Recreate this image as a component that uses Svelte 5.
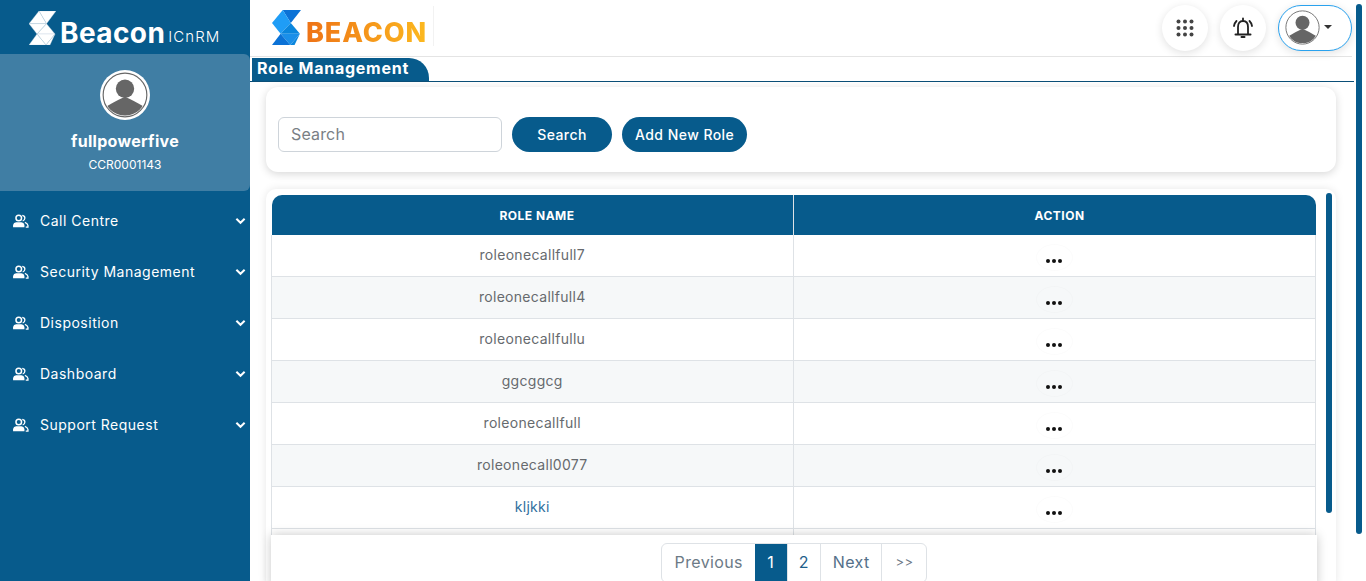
<script lang="ts">
  const menu = ["Call Centre", "Security Management", "Disposition", "Dashboard", "Support Request"];
  const roles = ["roleonecallfull7", "roleonecallfull4", "roleonecallfullu", "ggcggcg", "roleonecallfull", "roleonecall0077", "kljkki"];
</script>

{#snippet beaconMark(a: string, b: string, c: string, d: string, line: string)}
  <svg class="mark" viewBox="0 0 27 34" preserveAspectRatio="none" stroke={line} stroke-width="0.35">
    <polygon points="10,0 27,0 17.5,12.7" fill={a} />
    <polygon points="10,0 17.5,12.7 0,12.7" fill={b} />
    <polygon points="0,12.7 17.5,12.7 8,23" fill={b} />
    <polygon points="17.5,12.7 26,23 8,23" fill={c} />
    <polygon points="8,23 26,23 17,34" fill={d} />
    <polygon points="0,34 8,23 17,34" fill={a} />
    <polygon points="17,34 26,23 21,34" fill={c} />
  </svg>
{/snippet}

{#snippet avatar()}
  <svg viewBox="0 0 40 40" class="avatar-img">
    <defs>
      <clipPath id="av"><circle cx="20" cy="20" r="18" /></clipPath>
    </defs>
    <circle cx="20" cy="20" r="19" fill="#fff" stroke="#666" stroke-width="1" />
    <g clip-path="url(#av)" fill="#666">
      <circle cx="20" cy="14.5" r="8" />
      <path d="M2 38 L2 31 Q12 25 20 21.5 Q28 25 38 31 L38 38 Z" />
    </g>
  </svg>
{/snippet}

<div class="app">
  <aside class="sidebar">
    <div class="brand">
      <span class="brand-mark">{@render beaconMark("#fff", "#fff", "#fff", "#fff", "#b9cfdd")}</span>
      <span class="brand-name">Beacon</span>
      <span class="brand-sub">ICnRM</span>
    </div>
    <div class="profile">
      <div class="profile-pic">{@render avatar()}</div>
      <div class="profile-name">fullpowerfive</div>
      <div class="profile-code">CCR0001143</div>
    </div>
    <nav class="menu">
      {#each menu as item}
        <div class="menu-item">
          <svg class="menu-icon" viewBox="0 0 18 16" fill="#fff">
            <circle cx="7" cy="4.5" r="3.2" fill="none" stroke="#fff" stroke-width="1.7" />
            <path d="M0.5 15 V12.5 Q1 9.5 4 9.5 H10 Q13 9.5 13.5 12.5 V15 Z" />
            <path d="M11 1.5 Q14 2 14 4.5 Q14 7 11.5 8 M14 9.5 Q17 10.5 17.5 13 V15 H15" fill="none" stroke="#fff" stroke-width="1.5" />
          </svg>
          <span class="menu-label">{item}</span>
          <svg class="chev" viewBox="0 0 12 8"><path d="M1.5 1.5 L6 6 L10.5 1.5" fill="none" stroke="#fff" stroke-width="2.2" /></svg>
        </div>
      {/each}
    </nav>
  </aside>

  <main class="main">
    <header class="topbar">
      <div class="logo">
        {@render beaconMark("#0b72d6", "#1f9df6", "#0a86dd", "#1a8fe9", "none")}
        <span class="logo-text">BEACON</span>
      </div>
      <div class="top-actions">
        <button class="round" aria-label="Apps">
          <svg viewBox="0 0 18 18" width="18" height="18" fill="#444">
            {#each [2.5, 9, 15.5] as y}
              {#each [2.5, 9, 15.5] as x}
                <circle cx={x} cy={y} r="2" />
              {/each}
            {/each}
          </svg>
        </button>
        <button class="round" aria-label="Alerts">
          <svg viewBox="0 0 24 24" width="24" height="24" fill="none" stroke="#222" stroke-width="1.8">
            <path d="M7 18 V11 Q7 5 12 5 Q17 5 17 11 V18" />
            <path d="M4.5 18.5 H19.5" stroke-linecap="round" stroke-width="2" />
            <path d="M10.5 21 H13.5" stroke-linecap="round" stroke-width="2" />
            <path d="M12 2.5 V4" stroke-linecap="round" />
            <path d="M5.5 5 Q3.5 7 3 10 M18.5 5 Q20.5 7 21 10" stroke-linecap="round" />
          </svg>
        </button>
        <button class="user-pill" aria-label="User menu">
          <span class="pill-avatar">{@render avatar()}</span>
          <span class="caret"></span>
        </button>
      </div>
    </header>

    <div class="tab-row">
      <div class="tab">Role Management</div>
    </div>

    <div class="content">
      <section class="search-card">
        <input class="search" placeholder="Search" />
        <button class="btn btn-search">Search</button>
        <button class="btn">Add New Role</button>
      </section>

      <section class="table-wrap">
        <div class="table-card">
          <table>
            <thead>
              <tr><th>ROLE NAME</th><th>ACTION</th></tr>
            </thead>
            <tbody>
              {#each roles as role, i}
                <tr class:alt={i % 2 === 1}>
                  <td class:link={role === "kljkki"}>{role}</td>
                  <td><span class="dots"><i></i><i></i><i></i></span></td>
                </tr>
              {/each}
              <tr class="cut"><td></td><td></td></tr>
            </tbody>
          </table>
          <div class="pager-bar">
            <div class="pager">
              <span class="page prev">Previous</span>
              <span class="page num active">1</span>
              <span class="page num">2</span>
              <span class="page next">Next</span>
              <span class="page last">&gt;&gt;</span>
            </div>
          </div>
        </div>
        <div class="inner-scroll"></div>
      </section>
    </div>
  </main>
  <div class="page-scroll"></div>
</div>

<style>
  :global(body) {
    margin: 0;
    background: #fff;
    overflow: hidden;
  }
  .app {
    display: flex;
    width: 1366px;
    height: 581px;
    overflow: hidden;
    font-family: Inter, "Open Sans", sans-serif;
    color: #555;
  }
  .sidebar {
    width: 250px;
    flex: none;
    background: #075b8c;
    color: #fff;
  }
  .brand {
    height: 54px;
    display: flex;
    align-items: flex-end;
    padding: 0 0 9px 29px;
    box-sizing: border-box;
  }
  .brand-mark {
    width: 27px;
    height: 34px;
    flex: none;
    display: block;
  }
  .mark {
    display: block;
    width: 100%;
    height: 100%;
  }
  .brand-name {
    font-size: 28px;
    font-weight: 700;
    line-height: 24px;
    margin-left: 4px;
    letter-spacing: 0.4px;
  }
  .brand-sub {
    font-size: 15px;
    font-weight: 300;
    line-height: 17px;
    margin-left: 3px;
    letter-spacing: 1.1px;
  }
  .profile {
    height: 137px;
    background: #407ea4;
    border-radius: 0 6px 6px 0;
    display: flex;
    flex-direction: column;
    align-items: center;
    padding-top: 16px;
    box-sizing: border-box;
  }
  .profile-pic {
    width: 50px;
    height: 50px;
    background: #fff;
    border-radius: 50%;
    padding: 2px;
    box-sizing: border-box;
  }
  .avatar-img {
    display: block;
    width: 100%;
    height: 100%;
  }
  .profile-name {
    margin-top: 9px;
    font-size: 16px;
    font-weight: 700;
    line-height: 24px;
    letter-spacing: 0.3px;
  }
  .profile-code {
    margin-top: 3px;
    font-size: 12px;
    line-height: 18px;
  }
  .menu {
    padding-top: 4px;
  }
  .menu-item {
    height: 51px;
    display: flex;
    align-items: center;
    padding: 0 4px 0 12px;
  }
  .menu-icon {
    width: 17px;
    height: 14px;
    flex: none;
  }
  .menu-label {
    margin-left: 11px;
    font-size: 14px;
    font-weight: 400;
    flex: 1;
    letter-spacing: 0.5px;
  }
  .chev {
    width: 11px;
    height: 8px;
  }
  .main {
    flex: 1;
    min-width: 0;
  }
  .topbar {
    height: 57px;
    box-sizing: border-box;
    border-bottom: 1px solid #e4e4e4;
    display: flex;
    justify-content: space-between;
    padding: 0 0 0 22px;
    width: 1102px;
  }
  .logo {
    display: flex;
    align-items: flex-start;
    height: 40px;
    margin-top: 6px;
    padding-right: 6px;
    border-right: 1px solid #f2f2f2;
  }
  .logo :global(.mark) {
    width: 29px;
    height: 35px;
    margin-top: 4px;
  }
  .logo-text {
    font-size: 27px;
    font-weight: 800;
    line-height: 27px;
    margin-left: 5px;
    margin-top: 13px;
    background: linear-gradient(90deg, #ee7216, #fcb91f);
    -webkit-background-clip: text;
    background-clip: text;
    color: transparent;
    letter-spacing: 0.9px;
  }
  .top-actions {
    display: flex;
    gap: 12px;
    padding-top: 5px;
    align-items: flex-start;
  }
  .round {
    width: 46px;
    height: 46px;
    border-radius: 50%;
    border: none;
    background: #fff;
    box-shadow: 0 2px 8px rgba(0, 0, 0, 0.12);
    display: flex;
    align-items: center;
    justify-content: center;
    padding: 0;
  }
  .user-pill {
    width: 74px;
    height: 46px;
    border: 1px solid #2aa2ee;
    border-radius: 23px;
    background: #fff;
    box-shadow: 0 2px 8px rgba(0, 0, 0, 0.12);
    display: flex;
    align-items: center;
    padding: 0 0 2px 6px;
    box-sizing: border-box;
  }
  .pill-avatar {
    width: 35px;
    height: 35px;
    display: block;
  }
  .caret {
    margin-left: 4px;
    border-left: 4px solid transparent;
    border-right: 4px solid transparent;
    border-top: 4px solid #333;
  }
  .tab-row {
    margin-top: 1px;
    height: 23px;
    border-bottom: 1px solid #0b4f78;
    width: 1102px;
    display: flex;
    padding-left: 2px;
  }
  .tab {
    width: 177px;
    height: 23px;
    box-sizing: border-box;
    background: #075b8c;
    color: #fff;
    font-size: 16px;
    font-weight: 700;
    line-height: 21px;
    padding-left: 5px;
    border-radius: 0 20px 0 0;
    letter-spacing: 0.75px;
    white-space: nowrap;
  }
  .content {
    padding: 5px 0 0 16px;
  }
  .search-card {
    width: 1070px;
    height: 85px;
    background: #fff;
    border-radius: 12px;
    box-shadow: 0 2px 8px rgba(0, 0, 0, 0.16);
    display: flex;
    align-items: center;
    padding: 10px 12px 0;
    box-sizing: border-box;
    gap: 10px;
  }
  .search {
    width: 224px;
    height: 35px;
    box-sizing: border-box;
    border: 1px solid #ced4da;
    border-radius: 6px;
    padding: 0 12px 1px;
    font: inherit;
    font-size: 16px;
    letter-spacing: 0.15px;
    color: #555;
  }
  .search::placeholder {
    color: #7a7f85;
    opacity: 1;
  }
  .btn {
    height: 35px;
    border: none;
    border-radius: 18px;
    background: #075b8c;
    color: #fff;
    font: inherit;
    font-size: 14px;
    font-weight: 500;
    padding: 0 13px 1px;
    letter-spacing: 0.45px;
  }
  .btn-search {
    width: 100px;
  }
  .table-wrap {
    position: relative;
    margin-top: 17px;
    width: 1070px;
    height: 400px;
    padding: 6px 0 0 5px;
    box-sizing: border-box;
    border-radius: 10px;
    box-shadow: 0 0 8px rgba(0, 0, 0, 0.1);
  }
  .table-card {
    width: 1046px;
    height: 386px;
    position: relative;
    padding: 0 1px 0 0;
    box-sizing: border-box;
  }
  table {
    width: 100%;
    border-collapse: collapse;
    table-layout: fixed;
  }
  th {
    background: #075b8c;
    color: #fff;
    height: 40px;
    font-size: 12px;
    font-weight: 700;
    padding: 0 0 0 10px;
    letter-spacing: 0.5px;
  }
  th:first-child {
    width: 511px;
    border-right: 1px solid #dee2e6;
    border-top-left-radius: 10px;
  }
  th:last-child {
    border-top-right-radius: 10px;
  }
  td {
    height: 42px;
    padding: 0 0 1px;
    box-sizing: border-box;
    text-align: center;
    font-size: 14px;
    color: #666a6e;
    border-bottom: 1px solid #dee2e6;
    letter-spacing: 0.3px;
  }
  tbody tr:first-child td {
    height: 41px;
  }
  td:first-child {
    border-right: 1px solid #dee2e6;
    border-left: 1px solid #dee2e6;
  }
  td:last-child {
    border-right: 1px solid #dee2e6;
  }
  td.link {
    color: #2f6f9e;
  }
  tr.alt td {
    background: #f6f8f9;
  }
  .dots {
    display: inline-flex;
    align-items: center;
    justify-content: center;
    gap: 2px;
    width: 35px;
    height: 25px;
    margin-top: 8px;
    padding-top: 6px;
    box-sizing: border-box;
    border-radius: 50%;
    box-shadow: 0 0 0 1px rgba(0, 0, 0, 0.015);
    position: relative;
    top: -1px;
  }
  .dots i {
    width: 4px;
    height: 4px;
    border-radius: 50%;
    background: #111;
    display: block;
  }
  .pager-bar {
    position: absolute;
    left: 0;
    right: 0;
    top: 340px;
    height: 46px;
    background: #fff;
    box-shadow: 0 0 10px rgba(0, 0, 0, 0.22);
    display: flex;
    justify-content: center;
    align-items: flex-start;
    padding-top: 8px;
  }
  .pager {
    display: flex;
    height: 38px;
    border: 1px solid #dee2e6;
    border-radius: 6px;
    overflow: hidden;
    font-size: 16px;
    color: #1f5f8b;
  }
  .page {
    display: flex;
    align-items: center;
    justify-content: center;
    padding: 0 12px 2px;
    border-left: 1px solid #dee2e6;
    letter-spacing: 0.35px;
  }
  .page:first-child {
    border-left: none;
    padding: 0 12px 2px 13px;
  }
  .prev,
  .last {
    color: #6c7a86;
  }
  .next {
    color: #54708a;
  }
  .num {
    width: 33px;
    padding: 0 0 2px;
    box-sizing: border-box;
  }
  .active {
    width: 32px;
    background: #075b8c;
    color: #fff;
    border-left: none;
  }
  .last {
    font-size: 13px;
    padding: 0 13px 2px;
  }
  .inner-scroll {
    position: absolute;
    right: 4px;
    top: 4px;
    width: 6px;
    height: 320px;
    border-radius: 4px;
    background: #075b8c;
  }
  .page-scroll {
    position: absolute;
    left: 1356px;
    top: 4px;
    width: 6px;
    height: 530px;
    border-radius: 4px;
    background: #075b8c;
  }
</style>
